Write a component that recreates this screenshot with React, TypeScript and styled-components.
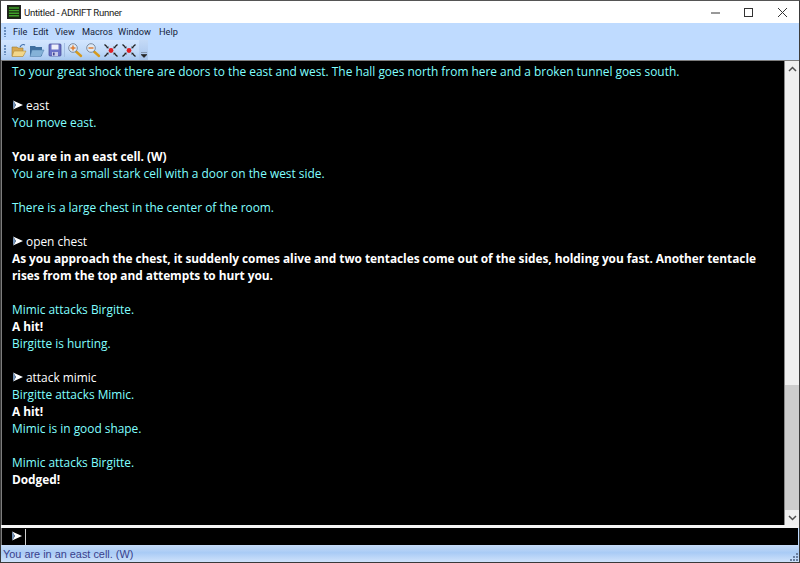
import React from "react";
import styled, { createGlobalStyle } from "styled-components";

const Global = createGlobalStyle`
  html, body { margin: 0; padding: 0; width: 800px; height: 563px; overflow: hidden; background: #fff; }
  * { box-sizing: border-box; }
`;

const Window = styled.div`
  width: 800px;
  height: 563px;
  display: flex;
  flex-direction: column;
  border: 1px solid #3a3a3a;
  border-top-color: #555;
  background: #bfdbff;
  font-family: "Liberation Sans", Arial, sans-serif;
  overflow: hidden;
`;

const TitleBar = styled.div`
  height: 22px;
  flex: none;
  background: #fff;
  display: flex;
  align-items: center;
  padding-left: 6px;
  color: #222;
  font: 9.6px Roboto, "Noto Sans", sans-serif;
`;

const TitleText = styled.span`
  margin-left: 3px;
  flex: 1;
  letter-spacing: -0.3px;
`;

const CaptionButton = styled.div`
  width: 33.5px;
  height: 22px;
  display: flex;
  align-items: center;
  justify-content: center;
`;

const MenuBar = styled.div`
  height: 17px;
  flex: none;
  display: flex;
  align-items: center;
  padding-left: 3px;
  font: 9.2px Roboto, "Noto Sans", sans-serif;
  color: #15233a;
`;

const Grip = styled.div<{ $gap: number }>`
  width: 2px;
  height: 10px;
  margin-right: ${(p) => p.$gap}px;
  flex: none;
  background-image: linear-gradient(#6a8fbf 2px, transparent 2px);
  background-size: 2px 3px;
`;

const MenuItem = styled.span<{ $w: number }>`
  width: ${(p) => p.$w}px;
  flex: none;
`;

const ToolRow = styled.div`
  height: 20px;
  flex: none;
  display: flex;
`;

const ToolBar = styled.div`
  width: 147px;
  height: 20px;
  padding-left: 3px;
  display: flex;
  align-items: center;
  position: relative;
  background: linear-gradient(#d3e6ff, #c0d9f8 60%, #a8c8f0);
  border-radius: 0 2px 2px 0;
`;

const ToolIcon = styled.div`
  width: 18px;
  height: 18px;
  flex: none;
  display: flex;
  align-items: center;
  justify-content: center;
`;

const ToolSep = styled.div`
  width: 1px;
  height: 14px;
  margin: 0 1px 0 0;
  background: #a3bde3;
  flex: none;
`;

const Overflow = styled.div`
  position: absolute;
  right: 0;
  top: 0;
  bottom: 0;
  width: 9px;
  display: flex;
  align-items: flex-end;
  justify-content: center;
  padding-bottom: 2px;
  background: linear-gradient(#c4daf7, #a6c4ec);
`;

const Output = styled.div`
  flex: 1;
  min-height: 0;
  display: flex;
  border-top: 1px solid #7d7d7d;
  border-left: 1px solid #7d7d7d;
  background: #000;
`;

const Transcript = styled.div`
  flex: 1;
  min-width: 0;
  padding: 2px 0 0 10px;
  font-family: "Open Sans", "Noto Sans", sans-serif;
  font-size: 11.9px;
  line-height: 17px;
  white-space: pre;
  overflow: hidden;
`;

const Line = styled.div<{ $kind?: "info" | "bold" | "cmd" }>`
  height: 17px;
  color: ${(p) => (p.$kind === "info" || !p.$kind ? "#80ffff" : "#fff")};
  font-weight: ${(p) => (p.$kind === "bold" ? 700 : 400)};
  letter-spacing: ${(p) => (p.$kind === "bold" ? "-0.05px" : "0")};
  display: flex;
  align-items: center;
`;

const Prompt = styled.span`
  width: 14px;
  display: inline-flex;
  flex: none;
`;

const Scrollbar = styled.div`
  width: 15px;
  flex: none;
  background: #f0f0f0;
  border-left: 1px solid #8a8a8a;
  display: flex;
  flex-direction: column;
`;

const ScrollArrow = styled.div`
  height: 15px;
  flex: none;
  display: flex;
  align-items: center;
  justify-content: center;
`;

const ScrollTrack = styled.div`
  flex: 1;
  display: flex;
  flex-direction: column;
  justify-content: flex-end;
`;

const ScrollThumb = styled.div`
  height: 125px;
  background: #cdcdcd;
`;

const Divider = styled.div`
  height: 3px;
  flex: none;
  background: #f4f4f4;
`;

const InputRow = styled.div`
  height: 17px;
  flex: none;
  display: flex;
  align-items: center;
  background: #000;
  border-left: 1px solid #7d7d7d;
  margin-right: 1px;
  padding-left: 9px;
`;

const Caret = styled.div`
  width: 1px;
  height: 16px;
  margin-left: 2px;
  background: #cfcfcf;
`;

const StatusBar = styled.div`
  height: 17px;
  flex: none;
  padding-left: 2px;
  display: flex;
  align-items: center;
  position: relative;
  background: linear-gradient(#c6dcf8, #a9cbf5 45%, #cfe2fb);
  color: #3a3f8c;
  font: 10.9px "Liberation Sans", Arial, sans-serif;
`;

const ResizeGrip = styled.svg`
  position: absolute;
  right: 1px;
  bottom: 1px;
`;

const PromptIcon = () => (
  <svg width="12" height="11" viewBox="0 0 12 11">
    <path d="M1 0.5 L11 5 L1 9.5 L4 5 Z" fill="#fff" />
    <path d="M1 0.5 L4 5 L1 9.5" fill="#6f8fb5" />
  </svg>
);

const OpenIcon = () => (
  <svg width="16" height="15" viewBox="0 0 16 15">
    <path d="M1 4h5l1 1h5v8H1z" fill="#d8a850" stroke="#9c7a30" strokeWidth=".6" />
    <path d="M3 8h12l-3 5.5H1z" fill="#f3d78a" stroke="#b08a3a" strokeWidth=".6" />
    <path d="M9 4c1-2 3-3 5-2" fill="none" stroke="#3a6aa8" strokeWidth="1.1" />
  </svg>
);

const FolderIcon = () => (
  <svg width="16" height="15" viewBox="0 0 16 15">
    <path d="M1 3h5l1 1h6v9H1z" fill="#3f6f9f" />
    <path d="M3 7h12l-3 6.5H1z" fill="#84b2d8" stroke="#4a7aa8" strokeWidth=".5" />
  </svg>
);

const SaveIcon = () => (
  <svg width="14" height="14" viewBox="0 0 14 14">
    <rect x="1" y="1" width="12" height="12" rx="1" fill="#6a72c8" stroke="#3f4490" strokeWidth=".7" />
    <rect x="3.5" y="1.5" width="7" height="5" fill="#eef0fa" />
    <rect x="4" y="9" width="6" height="4" fill="#c6c9e8" />
    <rect x="5" y="9.6" width="1.6" height="2.8" fill="#3f4490" />
  </svg>
);

const ZoomIcon = ({ plus }: { plus?: boolean }) => (
  <svg width="16" height="16" viewBox="0 0 16 16">
    <path d="M9 9.5l5 4.5" stroke="#d59a1e" strokeWidth="2.4" strokeLinecap="round" />
    <circle cx="6" cy="6" r="4.3" fill="#dfeaf6" stroke="#7a8aa0" strokeWidth="1" />
    <path d="M3.5 6h5" stroke="#e0782a" strokeWidth="1.4" />
    {plus && <path d="M6 3.5v5" stroke="#e0782a" strokeWidth="1.4" />}
  </svg>
);

const FitIcon = () => (
  <svg width="16" height="15" viewBox="0 0 16 15">
    <circle cx="8" cy="7.5" r="2.4" fill="#e01e24" />
    <g stroke="#222" strokeWidth="1.3" fill="none">
      <path d="M1.5 1.5l2.5 2.3M14.5 1.5l-2.5 2.3M1.5 13.5l2.5-2.3M14.5 13.5l-2.5-2.3" />
    </g>
    <g fill="#222">
      <path d="M5.6 5.4l-2.6-.4 2.2-2zM10.4 5.4l2.6-.4-2.2-2zM5.6 9.6l-2.6.4 2.2 2zM10.4 9.6l2.6.4-2.2 2z" />
    </g>
  </svg>
);

type Row = { t?: string; k?: "info" | "bold" | "cmd" };
const rows: Row[] = [
  { t: "To your great shock there are doors to the east and west. The hall goes north from here and a broken tunnel goes south." },
  { t: "" },
  { t: "east", k: "cmd" },
  { t: "You move east." },
  { t: "" },
  { t: "You are in an east cell. (W)", k: "bold" },
  { t: "You are in a small stark cell with a door on the west side." },
  { t: "" },
  { t: "There is a large chest in the center of the room." },
  { t: "" },
  { t: "open chest", k: "cmd" },
  { t: "As you approach the chest, it suddenly comes alive and two tentacles come out of the sides, holding you fast. Another tentacle", k: "bold" },
  { t: "rises from the top and attempts to hurt you.", k: "bold" },
  { t: "" },
  { t: "Mimic attacks Birgitte." },
  { t: "A hit!", k: "bold" },
  { t: "Birgitte is hurting." },
  { t: "" },
  { t: "attack mimic", k: "cmd" },
  { t: "Birgitte attacks Mimic." },
  { t: "A hit!", k: "bold" },
  { t: "Mimic is in good shape." },
  { t: "" },
  { t: "Mimic attacks Birgitte." },
  { t: "Dodged!", k: "bold" },
];

const menus: [string, number][] = [
  ["File", 20],
  ["Edit", 22],
  ["View", 27],
  ["Macros", 36],
  ["Window", 41],
  ["Help", 20],
];

export default function App() {
  return (
    <>
      <Global />
      <Window>
        <TitleBar>
          <svg width="14" height="14" viewBox="0 0 14 14">
            <rect x="0.5" y="0.5" width="13" height="13" fill="#1a2a10" stroke="#222" />
            <path d="M2 3h10M2 5.6h10M2 8.2h10M2 10.8h10" stroke="#3f9f2a" strokeWidth="1.4" />
          </svg>
          <TitleText>Untitled - ADRIFT Runner</TitleText>
          <CaptionButton>
            <svg width="9" height="9" viewBox="0 0 9 9"><path d="M0 5h9" stroke="#333" /></svg>
          </CaptionButton>
          <CaptionButton>
            <svg width="9" height="9" viewBox="0 0 9 9"><rect x=".5" y=".5" width="8" height="8" fill="none" stroke="#333" /></svg>
          </CaptionButton>
          <CaptionButton>
            <svg width="9" height="9" viewBox="0 0 9 9"><path d="M0 0l9 9M9 0L0 9" stroke="#333" /></svg>
          </CaptionButton>
        </TitleBar>
        <MenuBar>
          <Grip $gap={7} />
          {menus.map(([m, w]) => (
            <MenuItem key={m} $w={w}>{m}</MenuItem>
          ))}
        </MenuBar>
        <ToolRow>
          <ToolBar>
            <Grip $gap={4} />
            <ToolIcon><OpenIcon /></ToolIcon>
            <ToolIcon><FolderIcon /></ToolIcon>
            <ToolIcon><SaveIcon /></ToolIcon>
            <ToolSep />
            <ToolIcon><ZoomIcon plus /></ToolIcon>
            <ToolIcon><ZoomIcon /></ToolIcon>
            <ToolIcon><FitIcon /></ToolIcon>
            <ToolIcon><FitIcon /></ToolIcon>
            <Overflow>
              <svg width="6" height="6" viewBox="0 0 6 6"><path d="M0 0h6M0 2.5h6L3 5.5z" stroke="#222" strokeWidth=".6" fill="#222" /></svg>
            </Overflow>
          </ToolBar>
        </ToolRow>
        <Output>
          <Transcript>
            {rows.map((r, i) => (
              <Line key={i} $kind={r.k}>
                {r.k === "cmd" && <Prompt><PromptIcon /></Prompt>}
                {r.t}
              </Line>
            ))}
          </Transcript>
          <Scrollbar>
            <ScrollArrow>
              <svg width="9" height="6" viewBox="0 0 9 6"><path d="M1 5l3.5-3.5L8 5" fill="none" stroke="#505050" strokeWidth="1.5" /></svg>
            </ScrollArrow>
            <ScrollTrack><ScrollThumb /></ScrollTrack>
            <ScrollArrow>
              <svg width="9" height="6" viewBox="0 0 9 6"><path d="M1 1l3.5 3.5L8 1" fill="none" stroke="#505050" strokeWidth="1.5" /></svg>
            </ScrollArrow>
          </Scrollbar>
        </Output>
        <Divider />
        <InputRow>
          <PromptIcon />
          <Caret />
        </InputRow>
        <StatusBar>
          You are in an east cell. (W)
          <ResizeGrip width="9" height="9" viewBox="0 0 9 9">
            <path d="M7 1h2v2H7zM4 4h2v2H4zM7 4h2v2H7zM1 7h2v2H1zM4 7h2v2H4zM7 7h2v2H7z" fill="#6a7fa0" />
          </ResizeGrip>
        </StatusBar>
      </Window>
    </>
  );
}
